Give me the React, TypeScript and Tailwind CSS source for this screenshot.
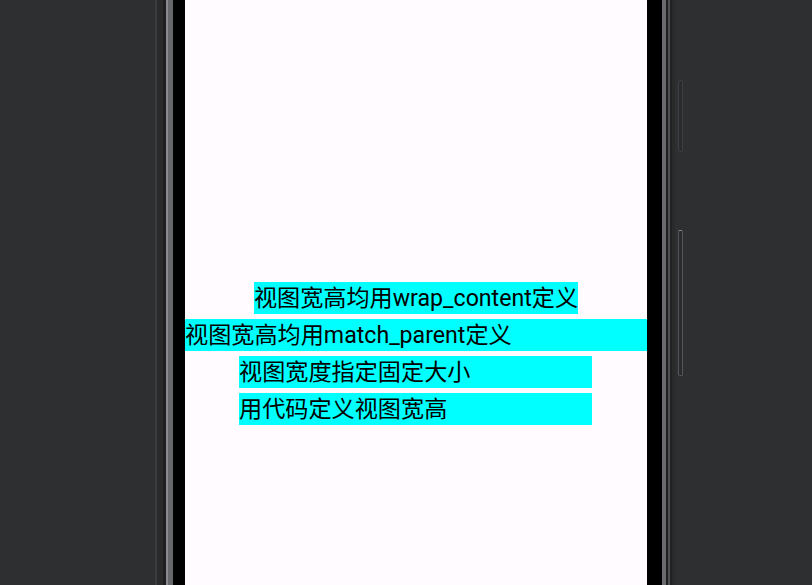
import React from "react";

const font = { fontFamily: '"Roboto", "Noto Sans CJK SC", sans-serif' };

export default function App() {
  return (
    <div className="relative w-[812px] h-[585px] bg-[#2e2f31] flex overflow-hidden">
      <div className="w-[155px] h-full" />
      {/* left frame edge */}
      <div className="w-[2px] h-full bg-[#3a3b3e]" />
      <div className="w-[6px] h-full bg-[#2a2a2b]" />
      <div className="w-[3px] h-full bg-[#1f1f20]" />
      <div className="w-[2px] h-full bg-[#8a8b8f]" />
      <div className="w-[5px] h-full bg-[#67686c]" />
      <div className="w-[12px] h-full bg-black" />
      {/* screen */}
      <div
        className="w-[462px] h-full bg-[#fffbfe] flex flex-col pt-[282px] gap-[5px] text-[23.15px] leading-[34px] text-black"
        style={font}
      >
        <div className="h-[32px] self-center w-fit bg-[#00ffff] whitespace-nowrap">
          视图宽高均用wrap_content定义
        </div>
        <div className="h-[32px] w-full bg-[#00ffff] whitespace-nowrap">
          视图宽高均用match_parent定义
        </div>
        <div className="h-[32px] w-[353px] ml-[54px] bg-[#00ffff] whitespace-nowrap">
          视图宽度指定固定大小
        </div>
        <div className="h-[32px] w-[353px] ml-[54px] bg-[#00ffff] whitespace-nowrap">
          用代码定义视图宽高
        </div>
      </div>
      {/* right frame edge */}
      <div className="w-[15px] h-full bg-black" />
      <div className="w-[4px] h-full bg-[#6a6b6e]" />
      <div className="w-[2px] h-full bg-[#1f1f20]" />
      <div className="w-[2px] h-full bg-[#4f5053]" />
      <div className="w-[2px] h-full bg-[#222223]" />
      <div className="w-[3px] h-full bg-[#2a2a2b]" />
      <div className="flex-1 h-full" />
      {/* side buttons */}
      <div className="absolute left-[678px] top-[80px] w-[5px] h-[72px] rounded-[2px] bg-[#2a2b2d] border border-[#3e3f42]" />
      <div className="absolute left-[678px] top-[230px] w-[5px] h-[146px] rounded-[2px] bg-[#2a2b2d] border border-[#55565a] border-t-[#8a8b8f]" />
    </div>
  );
}
